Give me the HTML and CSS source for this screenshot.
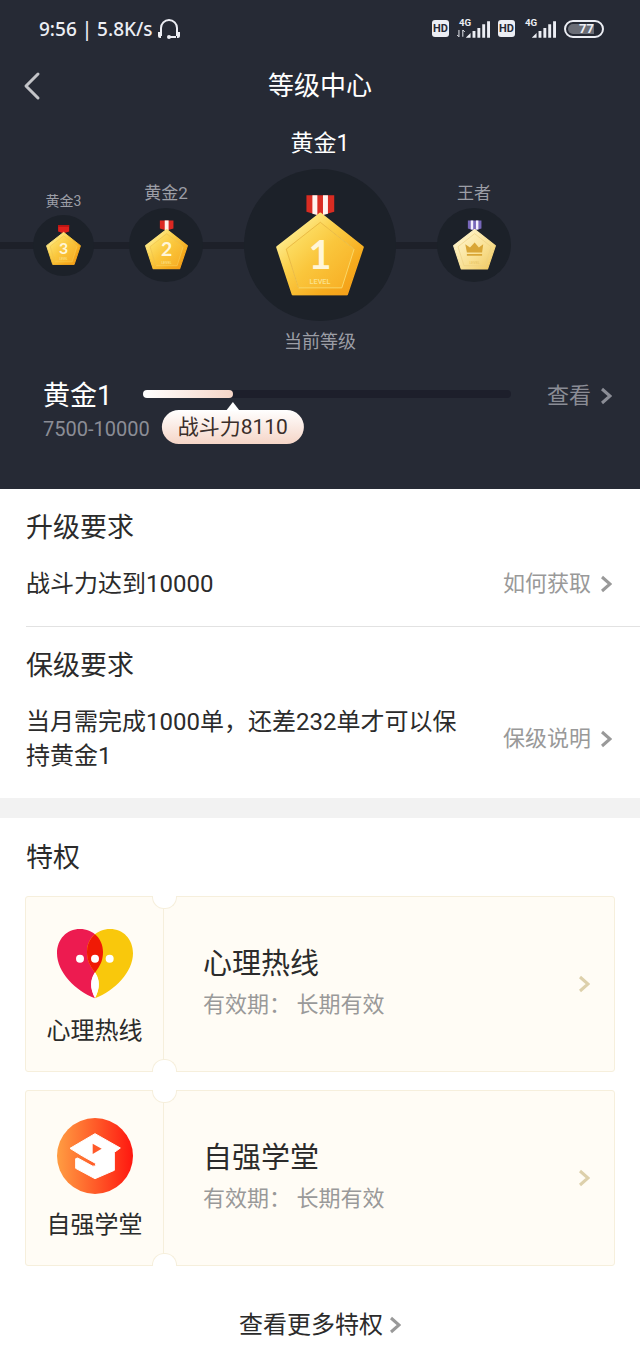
FILE: index.html
```html
<!DOCTYPE html>
<html lang="zh-CN">
<head>
  <meta charset="UTF-8">
  <meta name="viewport" content="width=device-width, initial-scale=1">
  <title>等级中心</title>
  <link rel="stylesheet" href="styles.css">
</head>
<body>

  <!-- shared shapes -->
  <svg class="defs" width="0" height="0" aria-hidden="true">
    <defs>
      <linearGradient id="gold" x1="0" y1="0" x2="1" y2="1">
        <stop offset="0.1" stop-color="#fff3a0"/>
        <stop offset="0.4" stop-color="#fbd04a"/>
        <stop offset="0.75" stop-color="#f6ab1d"/>
        <stop offset="1" stop-color="#f39a18"/>
      </linearGradient>
      <linearGradient id="goldInner" x1="0" y1="0" x2="1" y2="1">
        <stop offset="0.1" stop-color="#fde36c"/>
        <stop offset="0.5" stop-color="#fac63c"/>
        <stop offset="1" stop-color="#f7ac22"/>
      </linearGradient>
      <linearGradient id="pale" x1="0" y1="0" x2="1" y2="1">
        <stop offset="0.1" stop-color="#fff6cf"/>
        <stop offset="0.6" stop-color="#f9e092"/>
        <stop offset="1" stop-color="#efc65c"/>
      </linearGradient>
      <linearGradient id="orange" x1="0" y1="0" x2="1" y2="0">
        <stop offset="0" stop-color="#ff9d42"/>
        <stop offset="0.55" stop-color="#ff5526"/>
        <stop offset="1" stop-color="#ff1710"/>
      </linearGradient>
      <symbol id="medal" viewBox="0 0 266 304">
        <path d="M134 56 L262 157 L214 300 L51 300 L4 157 Z" fill="url(#gold)" stroke="url(#gold)" stroke-width="7" stroke-linejoin="round"/>
        <path d="M134 82 L236 163 L199 280 L68 280 L31 163 Z" fill="url(#goldInner)" stroke="#f9d868" stroke-width="3"/>
        <path d="M68 280 L31 163 L134 82 L236 163" fill="none" stroke="#e3ab30" stroke-width="2"/>
      </symbol>
      <symbol id="chevron" viewBox="0 0 12 18">
        <path d="M2 2 L10 9 L2 16" fill="none" stroke="currentColor" stroke-width="3"/>
      </symbol>
      <symbol id="signal" viewBox="0 0 34 24">
        <text x="2" y="9" font-size="10" font-weight="700" fill="currentColor">4G</text>
        <path d="M9 21 L14 16 V21 Z M16 14 h3 v7 h-3 Z M21 11 h3 v10 h-3 Z M26 7 h3 v14 h-3 Z M31 4 h3 v17 h-3 Z" fill="currentColor"/>
      </symbol>
      <path id="lobe" d="M114 223 C55 200 0 145 0 88 C0 46 29 15 69 15 C108 15 138 44 138 83 C138 105 132 120 120 137 C98 165 98 190 114 223 Z"/>
      <clipPath id="lobeClip"><use href="#lobe"/></clipPath>
    </defs>
  </svg>

  <header class="hero">
    <div class="status">
      <span class="status-text">9:56 | 5.8K/s</span>
      <svg class="headset" viewBox="0 0 22 20" aria-hidden="true">
        <path d="M3 17 V9 a8 8 0 0 1 16 0 V17 M18 18 H12" fill="none" stroke="currentColor" stroke-width="2"/>
        <path d="M0 13 h3 v6 h-1 a2 2 0 0 1 -2 -2 Z M22 13 h-3 v6 h1 a2 2 0 0 0 2 -2 Z" fill="currentColor"/>
        <circle cx="11" cy="18" r="2" fill="currentColor"/>
      </svg>
      <div class="status-icons">
        <span class="hd">HD</span>
        <svg class="signal" viewBox="0 0 34 24" aria-hidden="true">
          <use href="#signal"/>
          <path d="M2 13 V20 M0 18 L2 20 M6 20 V13 M6 13 L8 15" fill="none" stroke="currentColor" stroke-width="1"/>
        </svg>
        <span class="hd">HD</span>
        <svg class="signal" viewBox="0 0 34 24" aria-hidden="true"><use href="#signal"/></svg>
        <span class="battery"><b>77</b></span>
      </div>
    </div>

    <nav class="nav">
      <button class="back" type="button" aria-label="返回">
        <svg viewBox="0 0 18 30" aria-hidden="true"><path d="M15 3 L3 15 L15 27" fill="none" stroke="currentColor" stroke-width="3" stroke-linecap="round" stroke-linejoin="round"/></svg>
      </button>
      <h1>等级中心</h1>
    </nav>

    <div class="levels">
      <div class="side before">
        <div class="level small">
          <span class="name">黄金3</span>
          <div class="disc">
            <svg class="medal" viewBox="0 0 266 304" aria-hidden="true">
              <path d="M92 0 H176 V50 L134 62 L92 50 Z" fill="#e0201c"/>
              <path d="M92 0 H176 V14 H92 Z" fill="#b91512"/>
              <use href="#medal"/>
              <text x="133" y="222" class="digit">3</text>
              <text x="133" y="267" class="word">LEVEL</text>
            </svg>
          </div>
        </div>
        <div class="level">
          <span class="name">黄金2</span>
          <div class="disc">
            <svg class="medal" viewBox="0 0 266 304" aria-hidden="true">
              <path d="M92 0 H176 V50 L134 62 L92 50 Z" fill="#dc2822"/>
              <path d="M122 0 H146 V60 H122 Z" fill="#fff0ea"/>
              <use href="#medal"/>
              <text x="133" y="222" class="digit">2</text>
              <text x="133" y="267" class="word">LEVEL</text>
            </svg>
          </div>
        </div>
      </div>
      <div class="level current">
        <span class="name">黄金1</span>
        <div class="disc">
          <svg class="medal" viewBox="0 0 266 304" aria-hidden="true">
            <path d="M92 0 H176 V50 L134 62 L92 50 Z" fill="#d92c22"/>
            <path d="M110 0 H125 V60 L110 56 Z M142 0 H157 V56 L142 60 Z" fill="#fff4f0"/>
            <use href="#medal"/>
            <text x="133" y="222" class="digit">1</text>
            <text x="133" y="267" class="word">LEVEL</text>
          </svg>
        </div>
        <span class="caption">当前等级</span>
      </div>
      <div class="side">
        <div class="level">
          <span class="name">王者</span>
          <div class="disc">
            <svg class="medal" viewBox="0 0 266 304" aria-hidden="true">
              <path d="M92 0 H176 V50 L134 62 L92 50 Z" fill="#7767ba"/>
              <path d="M110 0 H125 V56 H110 Z M142 0 H157 V56 H142 Z" fill="#f3effc"/>
              <path d="M134 56 L262 157 L214 300 L51 300 L4 157 Z" fill="url(#pale)" stroke="url(#pale)" stroke-width="7" stroke-linejoin="round"/>
              <path d="M134 82 L236 163 L199 280 L68 280 L31 163 Z" fill="none" stroke="#ecd182" stroke-width="4"/>
              <path d="M76 147 L105 168 L134 137 L160 168 L187 147 L180 199 H86 Z M86 207 H180 V218 H86 Z" fill="#d9a636"/>
              <text x="133" y="267" class="word pale">LEVEL</text>
            </svg>
          </div>
        </div>
      </div>
    </div>

    <div class="progress">
      <div class="rank">
        <strong>黄金1</strong>
        <span>7500-10000</span>
      </div>
      <div class="track">
        <div class="fill" style="width: 24.4%">
          <span class="tip">战斗力8110</span>
        </div>
      </div>
      <a class="more" href="#">查看<svg class="chevron" aria-hidden="true"><use href="#chevron"/></svg></a>
    </div>
  </header>

  <main>
    <section class="rule">
      <h2>升级要求</h2>
      <div class="row">
        <p>战斗力达到10000</p>
        <a class="more" href="#">如何获取<svg class="chevron" aria-hidden="true"><use href="#chevron"/></svg></a>
      </div>
    </section>
    <section class="rule">
      <h2>保级要求</h2>
      <div class="row">
        <p>当月需完成1000单，还差232单才可以保持黄金1</p>
        <a class="more" href="#">保级说明<svg class="chevron" aria-hidden="true"><use href="#chevron"/></svg></a>
      </div>
    </section>

    <section class="perks">
      <h2>特权</h2>
      <a class="ticket" href="#">
        <div class="stub">
          <svg viewBox="0 0 228 228" aria-hidden="true">
            <use href="#lobe" fill="#ed1b50"/>
            <use href="#lobe" fill="#f9c80c" transform="matrix(-1 0 0 1 228 0)"/>
            <g clip-path="url(#lobeClip)">
              <use href="#lobe" fill="#f01a05" transform="matrix(-1 0 0 1 228 0)"/>
            </g>
            <path d="M114 145 C98 168 99 194 114 221 C129 194 130 168 114 145 Z" fill="#fff"/>
            <circle cx="69" cy="104" r="12" fill="#fff"/>
            <circle cx="114" cy="104" r="12" fill="#fff"/>
            <circle cx="158" cy="104" r="12" fill="#fff"/>
          </svg>
          <span>心理热线</span>
        </div>
        <div class="info">
          <h3>心理热线</h3>
          <p>有效期： 长期有效</p>
        </div>
        <svg class="chevron" aria-hidden="true"><use href="#chevron"/></svg>
      </a>
      <a class="ticket" href="#">
        <div class="stub">
          <svg viewBox="0 0 228 228" aria-hidden="true">
            <circle cx="114" cy="114" r="114" fill="url(#orange)"/>
            <path d="M114 47 L190 90 L172 103 V157 L114 182 L56 151 V122 L62 120 L106 144 Q113 146 116 141 Q117 137 112 134 L76 114 L39 91 Z" fill="#fff" stroke="#fff" stroke-width="3" stroke-linejoin="round"/>
            <path d="M107 77 L134 92 L107 108 Z" fill="#ff5a2a"/>
          </svg>
          <span>自强学堂</span>
        </div>
        <div class="info">
          <h3>自强学堂</h3>
          <p>有效期： 长期有效</p>
        </div>
        <svg class="chevron" aria-hidden="true"><use href="#chevron"/></svg>
      </a>
      <a class="all" href="#">查看更多特权<svg class="chevron" aria-hidden="true"><use href="#chevron"/></svg></a>
    </section>
  </main>

</body>
</html>
```
FILE: styles.css
```css
* {
  box-sizing: border-box;
}

body {
  margin: 0;
  background-color: #fff;
  color: #2b2b2b;
  font-family: Roboto, "Noto Sans CJK SC", sans-serif;
  font-size: 24px;
}

h1, h2, h3, p {
  margin: 0;
  font-weight: 400;
}

a {
  color: inherit;
  text-decoration: none;
}

.defs {
  position: absolute;
}

.chevron {
  flex: none;
  width: 12px;
  height: 18px;
}

/* dark top area */
.hero {
  background-color: #262a35;
  color: #fff;
  padding-bottom: 48px;
}

.status {
  display: flex;
  align-items: center;
  height: 57px;
  padding: 0 36px 0 39px;
  color: #eceef4;
}

.status-text {
  font-family: "Noto Sans", sans-serif;
  font-size: 19px;
  font-weight: 500;
  white-space: nowrap;
}

.headset {
  width: 22px;
  height: 20px;
  margin-left: 5px;
}

.status-icons {
  display: flex;
  align-items: center;
  gap: 8px;
  margin-left: auto;
}

.hd {
  width: 17px;
  border-radius: 3px;
  background-color: #eceef4;
  color: #262a35;
  font-size: 11px;
  font-weight: 700;
  line-height: 17px;
  text-align: center;
}

.signal {
  width: 33px;
  height: 24px;
}

.battery {
  display: flex;
  width: 40px;
  height: 18px;
  padding: 2px;
  border: 2px solid #eceef4;
  border-radius: 9px;
}

.battery b {
  width: 26px;
  border-radius: 5px 0 0 5px;
  background-color: #6a6d76;
  font-size: 13px;
  line-height: 10px;
  text-align: right;
}

.nav {
  display: grid;
  grid-template-columns: 60px 1fr 60px;
  align-items: center;
  height: 58px;
}

.back {
  display: flex;
  padding: 0 0 0 23px;
  border: 0;
  background: none;
  color: #c3c4c8;
}

.back svg {
  width: 18px;
  height: 30px;
}

.nav h1 {
  font-size: 26px;
  line-height: 38px;
  text-align: center;
}

/* medals on a line */
.levels {
  display: grid;
  grid-template-columns: 1fr auto 1fr;
  align-items: center;
  column-gap: 41px;
  background: linear-gradient(#1d2029, #1d2029) no-repeat 0 50% / calc(50% + 120px) 7px;
}

.side {
  display: flex;
  align-items: center;
  gap: 35px;
}

.before {
  justify-content: flex-end;
}

.level {
  display: grid;
  grid-template-rows: 54px auto 54px;
  justify-items: center;
  color: #9c9ea6;
  font-size: 17px;
}

.name {
  align-self: end;
  line-height: 30px;
  white-space: nowrap;
}

.disc {
  display: flex;
  align-items: center;
  justify-content: center;
  width: 74px;
  height: 74px;
  border-radius: 50%;
  background-color: #1c2129;
}

.medal {
  width: 43px;
  height: 50px;
}

.small {
  font-size: 14px;
}

.small .name {
  line-height: 28px;
}

.small .disc {
  width: 61px;
  height: 61px;
}

.small .medal {
  width: 35px;
  height: 42px;
}

.current .disc {
  width: 152px;
  height: 152px;
}

.current .medal {
  width: 88px;
  height: 101px;
}

.current .name {
  color: #fff;
  font-size: 23px;
  line-height: 50px;
}

.caption {
  font-size: 18px;
  line-height: 42px;
}

.digit {
  fill: #fff6d8;
  font-family: Lato, sans-serif;
  font-size: 120px;
  font-weight: 700;
  text-anchor: middle;
}

.word {
  fill: #fbe28c;
  font-family: Roboto, sans-serif;
  font-size: 22px;
  font-weight: 500;
  text-anchor: middle;
}

.word.pale {
  fill: #e9c566;
}

/* progress */
.progress {
  display: grid;
  grid-template-columns: 100px 1fr auto;
  align-items: start;
  padding: 0 28px 0 43px;
}

.rank strong {
  display: block;
  font-size: 27px;
  font-weight: 400;
  line-height: 42px;
}

.rank span {
  display: block;
  color: #8b8d96;
  font-size: 20px;
  line-height: 24px;
  white-space: nowrap;
}

.track {
  height: 8px;
  margin: 15px 36px 0 0;
  border-radius: 4px;
  background-color: #1d1f2b;
}

.fill {
  position: relative;
  height: 8px;
  border-radius: 4px;
  background: linear-gradient(90deg, #fff, #f5d5c7);
}

.tip {
  position: absolute;
  top: 20px;
  left: 100%;
  padding: 0 16px;
  border-radius: 17px;
  background: linear-gradient(#fff, #f5d5c7);
  color: #3a2e2a;
  font-size: 21px;
  line-height: 34px;
  white-space: nowrap;
  transform: translateX(-50%);
}

.tip::before {
  content: "";
  position: absolute;
  top: -8px;
  left: 50%;
  margin-left: -7px;
  border: 7px solid transparent;
  border-top: 0;
  border-bottom: 9px solid #fff;
}

.more {
  display: flex;
  align-items: center;
  gap: 9px;
  color: #999;
  font-size: 22px;
  line-height: 34px;
  white-space: nowrap;
}

.progress .more {
  color: #8b8d96;
  line-height: 42px;
}

/* requirements */
h2 {
  font-size: 27px;
  line-height: 40px;
}

.rule {
  margin-left: 26px;
  padding: 19px 28px 25px 0;
}

.rule + .rule {
  border-top: 1px solid #e2e2e2;
}

.row {
  display: flex;
  align-items: center;
  justify-content: space-between;
  gap: 44px;
  margin-top: 19px;
  line-height: 34px;
}

/* privileges */
.perks {
  padding: 20px 25px 9px;
  border-top: 20px solid #f2f2f2;
}

.perks h2 {
  margin-bottom: 18px;
  padding-left: 1px;
}

.ticket {
  position: relative;
  display: flex;
  align-items: center;
  height: 176px;
  margin-bottom: 18px;
  padding-right: 24px;
  border: 1px solid #f6efdc;
  border-radius: 3px;
  background-color: #fffcf5;
}

.ticket::before,
.ticket::after {
  content: "";
  position: absolute;
  left: 126px;
  width: 23px;
  height: 12px;
  border: 1px solid #f6efdc;
  background-color: #fff;
}

.ticket::before {
  top: -1px;
  border-top: 0;
  border-radius: 0 0 12px 12px;
}

.ticket::after {
  bottom: -1px;
  border-bottom: 0;
  border-radius: 12px 12px 0 0;
}

.stub {
  display: flex;
  flex-direction: column;
  align-items: center;
  gap: 12px;
  width: 138px;
  height: 100%;
  padding-top: 27px;
  border-right: 1px solid #f6efdc;
  line-height: 38px;
}

.stub svg {
  width: 76px;
  height: 76px;
}

.info {
  flex: 1;
  padding: 0 0 2px 39px;
}

.info h3 {
  font-size: 29px;
  line-height: 44px;
}

.info p {
  color: #999;
  font-size: 22px;
  line-height: 38px;
}

.ticket > .chevron {
  color: #ddd0ab;
}

.all {
  display: flex;
  align-items: center;
  justify-content: center;
  gap: 6px;
  padding-top: 22px;
  line-height: 38px;
}

.all .chevron {
  color: #999;
}
```
